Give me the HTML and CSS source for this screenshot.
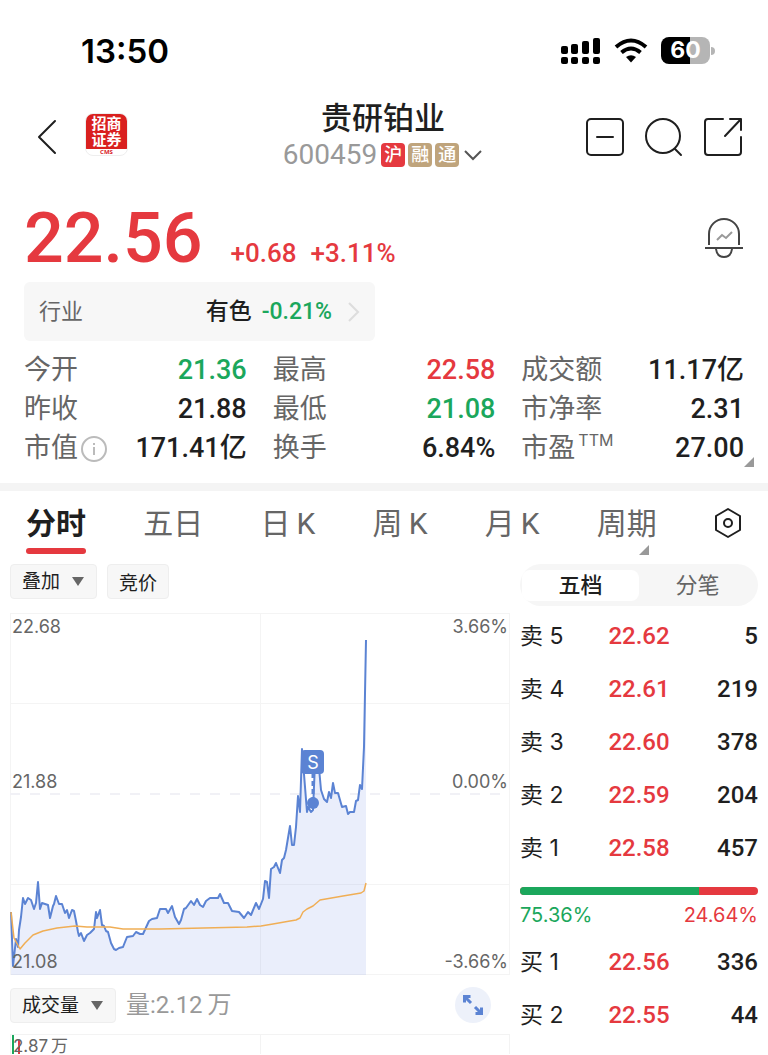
FILE: index.html
```html
<!DOCTYPE html>
<html lang="zh-CN">

<head>
  <meta charset="UTF-8">
  <meta name="viewport" content="width=device-width, initial-scale=1.0">
  <title>贵研铂业 600459</title>
  <link rel="stylesheet" href="styles.css">
</head>
<body>
  <!-- 状态栏 -->
  <div class="status-bar">
    <span class="clock">13:50</span>
    <div class="status-icons">
      <svg width="40" height="28" viewBox="0 0 40 28">
        <rect x="0" y="9" width="7" height="8" rx="2"/>
        <rect x="10" y="7" width="7" height="10" rx="2"/>
        <rect x="21" y="4" width="7" height="13" rx="2"/>
        <rect x="32" y="1" width="7" height="16" rx="2"/>
        <rect x="0" y="20" width="7" height="7" rx="2"/>
        <rect x="10" y="20" width="7" height="7" rx="2"/>
        <rect x="21" y="20" width="7" height="7" rx="2"/>
        <rect x="32" y="20" width="7" height="7" rx="2"/>
      </svg>
      <svg width="34" height="26" viewBox="0 0 34 26" fill="none" stroke="#000" stroke-width="4">
        <path d="M2 9 Q17 -4 32 9"/>
        <path d="M7.500 14.500 Q17 6.500 26.500 14.500"/>
        <path d="M12 19 Q17 15.500 22 19 L17 24.500 Z" fill="#000" stroke="none"/>
      </svg>
      <div class="battery"><span class="battery-body">60</span><span class="battery-cap"></span></div>
    </div>
  </div>

  <!-- 标题 -->
  <header class="header">
    <div class="header-left">
      <button class="icon-button" aria-label="返回">
        <svg width="20" height="36" viewBox="0 0 20 36" class="line-icon"><path d="M18 2 L2 18 L18 34"/></svg>
      </button>
      <a href="#" class="broker">
        <span class="broker-name">招商<br>证券</span>
        <span class="broker-cms">CMS</span>
      </a>
    </div>
    <div class="stock">
      <h1>贵研铂业</h1>
      <div class="stock-code">
        <span>600459</span>
        <span class="badges"><i class="badge badge-red">沪</i><i class="badge">融</i><i class="badge">通</i></span>
        <button class="icon-button" aria-label="展开">
          <svg width="20" height="12" viewBox="0 0 20 12" fill="none" stroke="#555" stroke-width="2"><path d="M2 2 L10 10 L18 2"/></svg>
        </button>
      </div>
    </div>
    <div class="header-right">
      <button class="icon-button" aria-label="移除自选">
        <svg width="40" height="40" viewBox="0 0 40 40" class="line-icon"><rect x="2" y="2" width="36" height="36" rx="4"/><path d="M12 20 H28"/></svg>
      </button>
      <button class="icon-button" aria-label="搜索">
        <svg width="40" height="40" viewBox="0 0 40 40" class="line-icon"><circle cx="19" cy="19" r="17"/><path d="M31 32 L37 38"/></svg>
      </button>
      <button class="icon-button" aria-label="分享">
        <svg width="40" height="40" viewBox="0 0 40 40" class="line-icon"><path d="M20 2 H5 Q2 2 2 5 V35 Q2 38 5 38 H35 Q38 38 38 35 V20"/><path d="M27 2 H38 V13 M38 2 L22 19"/></svg>
      </button>
    </div>
  </header>

  <!-- 报价 -->
  <section class="quote">
    <div class="price-row">
      <span class="price">22.56</span>
      <span class="change">+0.68</span>
      <span class="change">+3.11%</span>
      <button class="icon-button alert" aria-label="股价提醒">
        <svg width="40" height="42" viewBox="0 0 40 42" fill="none" stroke="#444" stroke-width="2">
          <path d="M5 28 V17 A15 15 0 0 1 35 17 V28"/>
          <path d="M1 31 H39 M12 32 Q13 40 20 40 Q27 40 28 32"/>
          <path d="M13 23 L18 18 L22 21 L28 15" stroke="#999"/>
        </svg>
      </button>
    </div>
    <a href="#" class="industry">
      <span class="industry-label">行业</span>
      <span class="industry-name">有色</span>
      <span class="industry-change down">-0.21%</span>
      <svg width="12" height="22" viewBox="0 0 12 22" fill="none" stroke="#ddd" stroke-width="2"><path d="M1 2 L10 11 L1 20"/></svg>
    </a>
    <dl class="stats">
      <div><dt>今开</dt><dd class="down">21.36</dd></div>
      <div><dt>最高</dt><dd class="up">22.58</dd></div>
      <div><dt>成交额</dt><dd>11.17亿</dd></div>
      <div><dt>昨收</dt><dd>21.88</dd></div>
      <div><dt>最低</dt><dd class="down">21.08</dd></div>
      <div><dt>市净率</dt><dd>2.31</dd></div>
      <div>
        <dt>市值<svg class="info" width="26" height="26" viewBox="0 0 26 26" fill="none" stroke="#bbb" stroke-width="2"><circle cx="13" cy="13" r="12"/><path d="M13 11 V19 M13 7 V9"/></svg></dt>
        <dd>171.41亿</dd>
      </div>
      <div><dt>换手</dt><dd>6.84%</dd></div>
      <div><dt>市盈<sup>TTM</sup></dt><dd>27.00</dd></div>
    </dl>
  </section>

  <!-- 周期切换 -->
  <nav class="tabs">
    <button class="tab active">分时</button>
    <button class="tab">五日</button>
    <button class="tab">日&thinsp;K</button>
    <button class="tab">周&thinsp;K</button>
    <button class="tab">月&thinsp;K</button>
    <button class="tab more">周期</button>
    <button class="icon-button" aria-label="设置">
      <svg width="28" height="30" viewBox="0 0 28 30" class="line-icon"><path d="M14 1 L26 8 V22 L14 29 L2 22 V8 Z"/><circle cx="14" cy="15" r="4"/></svg>
    </button>
  </nav>

  <main class="content">
    <section class="chart-side">
      <div class="chips">
        <span class="select"><select aria-label="叠加"><option>叠加</option></select></span>
        <button class="chip">竞价</button>
      </div>

      <!-- 分时图 -->
      <div class="chart">
        <svg viewBox="0 0 500 362" fill="none">
          <g stroke="#f4f4f4">
            <rect x="0.500" y="0.500" width="499" height="361"/>
            <path d="M0 90.500 H500 M0 271.500 H500 M250.500 0 V362"/>
          </g>
          <path d="M0 181 H500" stroke="#f1f1f6" stroke-width="2" stroke-dasharray="10 10"/>
          <path class="area" d="M1 299 L3 353 6 326 8 334 9 317 11 304 13 285 15 291 18 285 21 287 24 296 26 290 28 269 30 296 32 290 38 292 40 305 43 293 44 291 46 283 49 291 52 291 55 300 57 297 59 305 62 297 64 298 66 308 68 319 69 323 71 320 74 328 77 322 80 320 84 316 86 299 87 305 90 297 92 312 94 313 96 318 98 319 101 330 104 336 106 337 109 335 113 334 117 324 123 323 126 319 130 321 133 321 139 308 142 306 147 305 150 296 156 296 158 300 162 293 165 304 169 311 171 307 174 296 176 295 181 288 184 292 187 286 190 292 193 294 196 288 200 285 208 285 210 281 214 290 218 290 222 298 229 299 234 305 238 299 241 302 246 290 249 296 253 286 255 268 257 269 259 285 261 256 264 254 266 250 270 260 272 247 274 245 276 237 280 213 282 232 284 232 286 214 288 183 290 199 292 136 297 199 298 194 301 199 303 197 305 150 309 155 311 177 314 186 317 189 319 179 321 185 323 170 325 180 328 180 332 194 336 193 338 201 340 199 344 199 346 188 348 187 350 172 352 176 354 134 356 27 V362 H1 Z"/>
          <path class="line" d="M1 299 L3 353 6 326 8 334 9 317 11 304 13 285 15 291 18 285 21 287 24 296 26 290 28 269 30 296 32 290 38 292 40 305 43 293 44 291 46 283 49 291 52 291 55 300 57 297 59 305 62 297 64 298 66 308 68 319 69 323 71 320 74 328 77 322 80 320 84 316 86 299 87 305 90 297 92 312 94 313 96 318 98 319 101 330 104 336 106 337 109 335 113 334 117 324 123 323 126 319 130 321 133 321 139 308 142 306 147 305 150 296 156 296 158 300 162 293 165 304 169 311 171 307 174 296 176 295 181 288 184 292 187 286 190 292 193 294 196 288 200 285 208 285 210 281 214 290 218 290 222 298 229 299 234 305 238 299 241 302 246 290 249 296 253 286 255 268 257 269 259 285 261 256 264 254 266 250 270 260 272 247 274 245 276 237 280 213 282 232 284 232 286 214 288 183 290 199 292 136 297 199 298 194 301 199 303 197 305 150 309 155 311 177 314 186 317 189 319 179 321 185 323 170 325 180 328 180 332 194 336 193 338 201 340 199 344 199 346 188 348 187 350 172 352 176 354 134 356 27"/>
          <path class="average" d="M1 299 L4 325 10 336 15 330 23 322 33 318 47 315 65 313 77 314 100 314 113 316 150 316 237 314 251 313 263 311 280 308 286 307 290 305 293 299 297 296 303 293 310 287 333 283 351 280 354 278 356 270"/>
          <!-- 卖出点 -->
          <path d="M303 160 V190" stroke="#5b83d3" stroke-width="3" stroke-dasharray="5 3"/>
          <circle cx="303" cy="190" r="6" fill="#5b83d3"/>
          <rect x="291" y="137" width="23" height="24" rx="4" fill="#5b83d3"/>
          <text x="303" y="156" class="sell-mark">S</text>
        </svg>
        <span class="axis top-left">22.68</span>
        <span class="axis top-right">3.66%</span>
        <span class="axis middle-left">21.88</span>
        <span class="axis middle-right">0.00%</span>
        <span class="axis bottom-left">21.08</span>
        <span class="axis bottom-right">-3.66%</span>
      </div>

      <!-- 成交量 -->
      <div class="volume-bar">
        <span class="select"><select aria-label="指标"><option>成交量</option></select></span>
        <span class="volume-text">量:2.12&thinsp;万</span>
        <button class="expand" aria-label="全屏">
          <svg width="20" height="20" viewBox="0 0 20 20" fill="none" stroke="#5b83d3" stroke-width="3"><path d="M1.500 7.500 V1.500 H7.500 M2 2 L8 8 M18.500 12.500 V18.500 H12.500 M18 18 L12 12"/></svg>
        </button>
      </div>
      <div class="volume-chart">
        <span class="bar-green"></span>
        <span class="bar-red"></span>
        <span class="volume-max">2.87&thinsp;万</span>
      </div>
    </section>

    <!-- 五档盘口 -->
    <section class="book-side">
      <div class="segment">
        <button class="active">五档</button>
        <button>分笔</button>
      </div>
      <table class="book">
        <tr><th>卖 5</th><td class="up">22.62</td><td>5</td></tr>
        <tr><th>卖 4</th><td class="up">22.61</td><td>219</td></tr>
        <tr><th>卖 3</th><td class="up">22.60</td><td>378</td></tr>
        <tr><th>卖 2</th><td class="up">22.59</td><td>204</td></tr>
        <tr><th>卖 1</th><td class="up">22.58</td><td>457</td></tr>
      </table>
      <div class="ratio"><span class="ratio-buy" style="width: 75.36%"></span></div>
      <div class="ratio-text"><span class="down">75.36%</span><span class="up">24.64%</span></div>
      <table class="book">
        <tr><th>买 1</th><td class="up">22.56</td><td>336</td></tr>
        <tr><th>买 2</th><td class="up">22.55</td><td>44</td></tr>
      </table>
    </section>
  </main>
</body>

</html>
```

FILE: styles.css
```css
/* 公共样式 */
* {
  box-sizing: border-box;
}

body {
  margin: 0;
  background-color: #fff;
  color: #1f1f1f;
  font-family: Roboto, "Noto Sans CJK SC", sans-serif;
}

button,
select {
  padding: 0;
  border: none;
  background: none;
  color: inherit;
  font-family: inherit;
  cursor: pointer;
}

a {
  color: inherit;
  text-decoration: none;
}

svg {
  display: block;
}

.up {
  color: #e5393f;
}

.down {
  color: #1ba75c;
}

.line-icon {
  fill: none;
  stroke: #1f1f1f;
  stroke-width: 2;
  stroke-linecap: round;
  stroke-linejoin: round;
}

/* 状态栏 */
.status-bar {
  display: flex;
  justify-content: space-between;
  align-items: center;
  height: 101px;
  padding: 0 53px 0 81px;
}

.clock {
  color: #000;
  font: 600 33px/40px Inter, sans-serif;
}

.status-icons {
  display: flex;
  align-items: center;
  gap: 13px;
}

.battery {
  display: flex;
  align-items: center;
  gap: 1px;
}

.battery-body {
  width: 49px;
  border-radius: 8px;
  background: linear-gradient(90deg, #000 60%, #b5b5b5 60%);
  color: #fff;
  text-align: center;
  font: 700 23px/27px Inter, sans-serif;
}

.battery-cap {
  width: 4px;
  height: 8px;
  border-radius: 0 4px 4px 0;
  background-color: #b5b5b5;
}

/* 标题 */
.header {
  display: grid;
  grid-template-columns: 1fr auto 1fr;
  align-items: center;
  height: 72px;
  padding: 0 25px 0 23px;
}

.header-left {
  display: flex;
  align-items: center;
  gap: 28px;
  padding-left: 14px;
}

.broker {
  width: 43px;
  height: 43px;
  margin-bottom: 6px;
  border: 1px solid #eee;
  border-radius: 8px;
  background-color: #fff;
  overflow: hidden;
  text-align: center;
}

.broker-name {
  display: block;
  padding: 2px 0 1px;
  background-color: #d9201f;
  color: #fff;
  font-size: 15px;
  font-weight: 700;
  line-height: 16px;
}

.broker-cms {
  display: block;
  color: #d9201f;
  font: 700 6px/6px "Open Sans", sans-serif;
}

.stock h1 {
  margin: 0;
  text-align: center;
  font-size: 31px;
  font-weight: 500;
  line-height: 36px;
}

.stock-code {
  display: flex;
  align-items: center;
  gap: 4px;
  color: #999;
  font-size: 28px;
  line-height: 36px;
}

.badges {
  display: flex;
  gap: 3px;
}

.badge {
  width: 24px;
  border-radius: 4px;
  background-color: #bfa47c;
  color: #fff;
  text-align: center;
  font-size: 18px;
  font-style: normal;
  font-weight: 500;
  line-height: 24px;
}

.badge-red {
  background-color: #e5393f;
}

.header-right {
  display: flex;
  justify-content: flex-end;
  gap: 19px;
}

/* 报价 */
.quote {
  position: relative;
  padding: 25px 24px 15px;
  border-bottom: 8px solid #f4f4f4;
}

/* 右下角三角 */
.quote::after,
.more::after {
  content: "";
  position: absolute;
  right: 14px;
  bottom: 16px;
  border-bottom: 10px solid #999;
  border-left: 10px solid transparent;
}

.price-row {
  display: flex;
  align-items: baseline;
  gap: 14px;
  margin-bottom: 4px;
  color: #e5393f;
}

.price {
  margin-right: 14px;
  font-size: 70px;
  font-weight: 500;
  line-height: 80px;
}

.change {
  font-size: 26px;
  font-weight: 500;
}

.alert {
  align-self: center;
  margin-left: auto;
}

.industry {
  display: flex;
  align-items: center;
  gap: 10px;
  width: 50%;
  max-width: 351px;
  height: 59px;
  padding: 0 15px;
  border-radius: 6px;
  background-color: #f7f7f7;
  font-size: 23px;
  line-height: 30px;
}

.industry-label {
  margin-right: auto;
  color: #666;
  font-size: 22px;
}

.industry-name,
.industry-change {
  font-weight: 500;
}

.industry svg {
  margin-left: 6px;
}

.stats {
  display: grid;
  grid-template-columns: repeat(3, 1fr);
  column-gap: 26px;
  margin: 10px 0 0;
  font-size: 27px;
  line-height: 39px;
}

.stats div {
  display: flex;
  justify-content: space-between;
  height: 39px;
}

.stats dt {
  display: flex;
  align-items: center;
  color: #666;
}

.stats dd {
  margin: 0;
  font-weight: 500;
}

.stats .info {
  margin-left: 3px;
}

.stats sup {
  align-self: flex-start;
  margin-left: 3px;
  font: 16px/22px Inter, sans-serif;
}

/* 周期切换 */
.tabs {
  display: flex;
  justify-content: space-between;
  align-items: flex-start;
  padding: 8px 26px 0;
}

.tab {
  position: relative;
  color: #666;
  font-size: 30px;
  line-height: 49px;
}

.tab.active {
  color: #1f1f1f;
  font-weight: 700;
}

.tab.active::after {
  content: "";
  display: block;
  height: 6px;
  border-radius: 3px;
  background-color: #e5393f;
}

.more::after {
  right: 8px;
  bottom: -7px;
}

.tabs .icon-button {
  padding-top: 9px;
}

/* 内容 */
.content {
  display: grid;
  grid-template-columns: 500fr 238fr;
  gap: 10px;
  padding: 10px 10px 0;
}

.chips {
  display: flex;
  gap: 10px;
  margin-bottom: 14px;
}

.chip,
.select select {
  height: 35px;
  padding: 0 11px;
  border: 1px solid #eee;
  border-radius: 4px;
  background-color: #f7f7f7;
  font-size: 19px;
}

.select {
  position: relative;
}

.select select {
  appearance: none;
  padding-right: 35px;
}

.select::after {
  content: "";
  position: absolute;
  top: 13px;
  right: 13px;
  border-top: 9px solid #666;
  border-left: 6px solid transparent;
  border-right: 6px solid transparent;
  pointer-events: none;
}

/* 分时图 */
.chart {
  position: relative;
}

.chart svg {
  width: 100%;
}

.area {
  fill: #5b7fe3;
  fill-opacity: 0.13;
}

.line {
  stroke: #5b83d3;
  stroke-width: 2;
  stroke-linejoin: round;
}

.average {
  stroke: #f0ae55;
  stroke-width: 1.5;
  stroke-linejoin: round;
}

.sell-mark {
  fill: #fff;
  text-anchor: middle;
  font: 18px Inter, sans-serif;
}

.axis {
  position: absolute;
  color: #666;
  font: 18px/24px Inter, sans-serif;
}

.top-left,
.middle-left,
.bottom-left {
  left: 2px;
}

.top-right,
.middle-right,
.bottom-right {
  right: 2px;
}

.top-left,
.top-right {
  top: 2px;
}

.middle-left,
.middle-right {
  bottom: 50%;
}

.bottom-left,
.bottom-right {
  bottom: 1px;
}

/* 成交量 */
.volume-bar {
  display: flex;
  align-items: center;
  gap: 10px;
  margin: 12px 0 11px;
}

.volume-text {
  color: #999;
  font-size: 24px;
  line-height: 34px;
}

.expand {
  display: grid;
  place-items: center;
  width: 36px;
  height: 36px;
  margin: 0 19px 0 auto;
  border-radius: 50%;
  background-color: #edf1fa;
}

.volume-chart {
  display: flex;
  height: 20px;
  border: 1px solid #f3f3f3;
  border-bottom: none;
  background: linear-gradient(90deg, transparent 50%, #f3f3f3 50%, #f3f3f3 calc(50% + 1px), transparent calc(50% + 1px));
}

.bar-green,
.bar-red {
  width: 2px;
  margin-left: 1px;
  background-color: #1ba75c;
}

.bar-red {
  margin: 5px 0 0 4px;
  background-color: #e5393f;
}

.volume-max {
  margin-left: -7px;
  padding-top: 3px;
  color: #666;
  font: 17px/16px Inter, "Noto Sans CJK SC", sans-serif;
}

/* 五档盘口 */
.segment {
  display: grid;
  grid-template-columns: 1fr 1fr;
  height: 42px;
  margin-bottom: 3px;
  padding: 6px 2px 5px;
  border-radius: 21px;
  background-color: #f6f6f6;
}

.segment button {
  border-radius: 8px;
  color: #666;
  font-size: 22px;
  line-height: 31px;
}

.segment .active {
  background-color: #fff;
  color: #1f1f1f;
  font-weight: 500;
}

.book {
  width: 100%;
  border-collapse: collapse;
  font-size: 24px;
  line-height: 28px;
}

.book th,
.book td {
  height: 53px;
  padding: 0;
  text-align: center;
  font-weight: 500;
}

.book th {
  width: 30%;
  text-align: left;
  font: 23px/28px Inter, "Noto Sans CJK SC", sans-serif;
}

.book td:last-child {
  width: 30%;
  text-align: right;
}

.ratio {
  height: 8px;
  margin-top: 13px;
  border-radius: 4px;
  background-color: #e5393f;
  overflow: hidden;
}

.ratio-buy {
  display: block;
  height: 100%;
  background-color: #1ba75c;
}

.ratio-text {
  display: flex;
  justify-content: space-between;
  margin: 6px 0;
  font: 20px/28px Inter, sans-serif;
}
```
